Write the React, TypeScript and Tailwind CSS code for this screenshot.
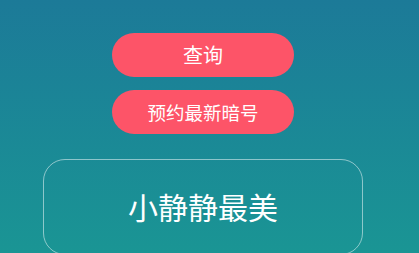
export default function App() {
  return (
    <div
      className="w-[419px] h-[253px] overflow-hidden bg-gradient-to-b from-[#1c7a98] to-[#1a9594] flex flex-col items-center pt-[33px] pr-[13px]"
      style={{ fontFamily: '"Noto Sans CJK SC", "Noto Sans", sans-serif' }}
    >
      <div className="flex flex-col items-center gap-[13px]">
        <button className="w-[182px] h-[44px] rounded-full bg-[#fd5468] text-white text-[20px] leading-none">
          查询
        </button>
        <button className="w-[182px] h-[44px] rounded-full bg-[#fd5468] text-white text-[18.5px] leading-none">
          预约最新暗号
        </button>
      </div>

      <div className="mt-[25px] w-[320px] h-[96px] shrink-0 rounded-[22px] border border-white/50 flex items-center justify-center">
        <span className="text-white text-[30px] leading-none pb-[2px]">小静静最美</span>
      </div>
    </div>
  );
}
